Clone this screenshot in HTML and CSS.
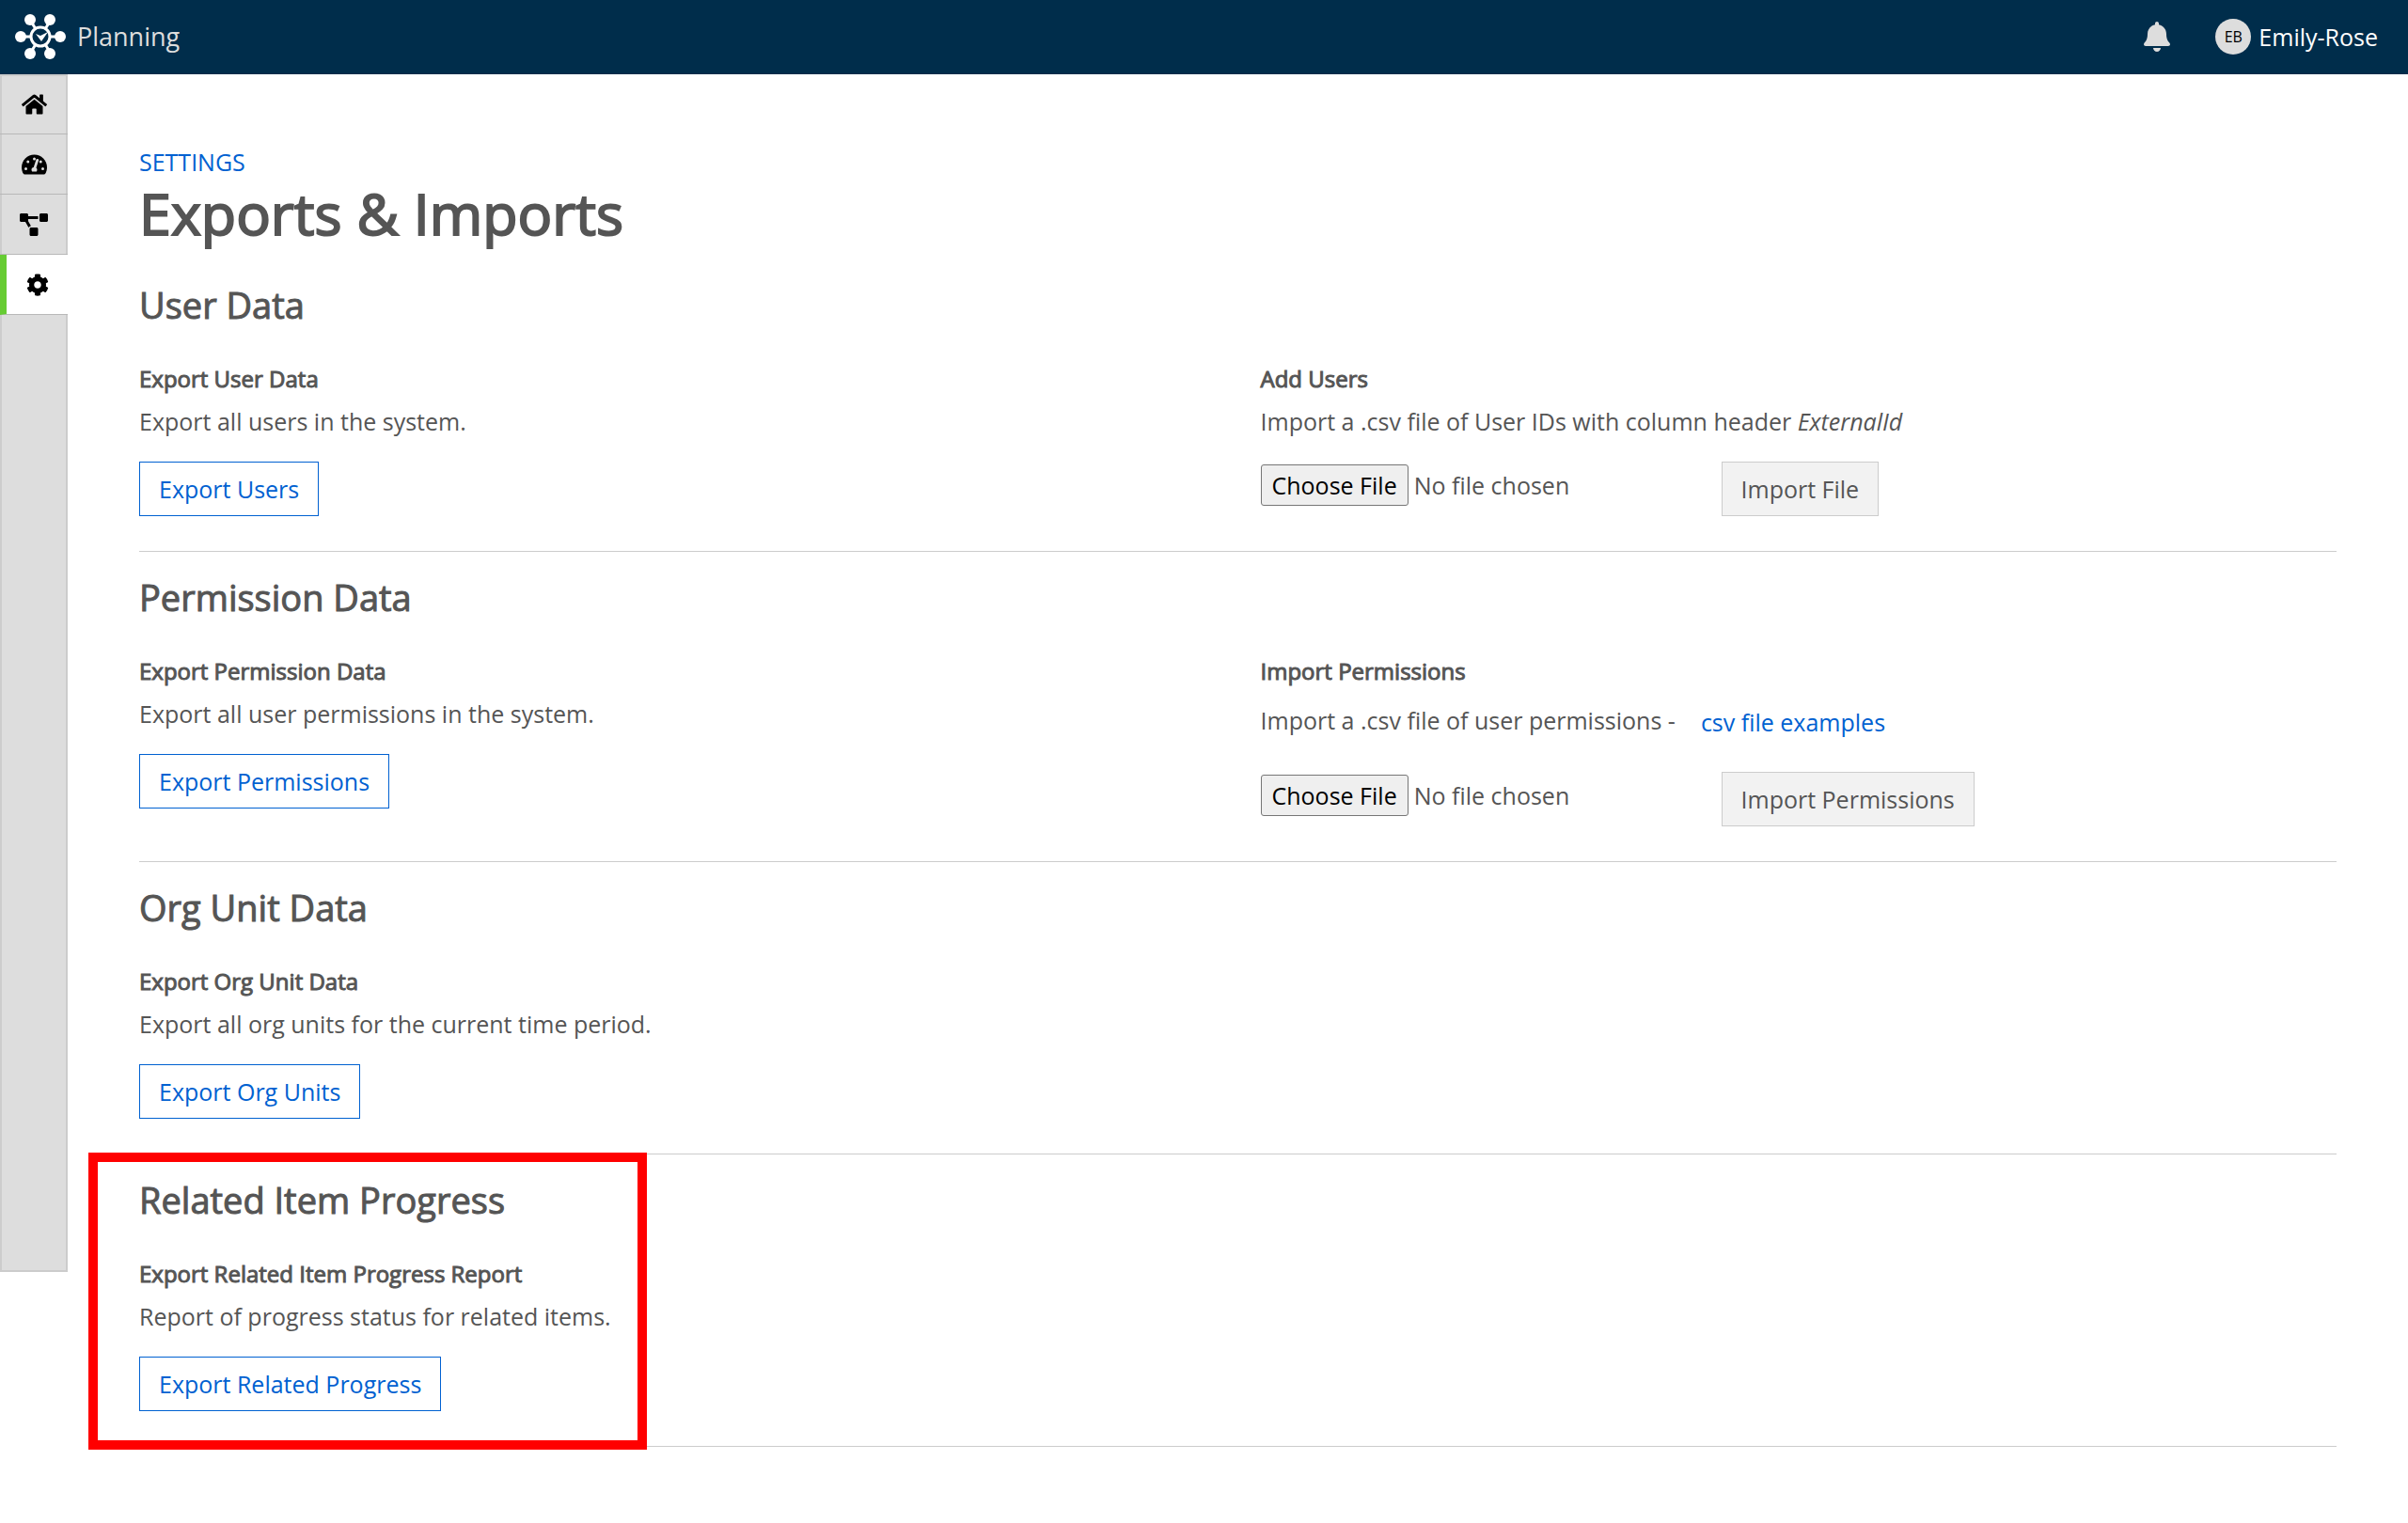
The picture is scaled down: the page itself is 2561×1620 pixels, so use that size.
FILE: index.html
```html
<!DOCTYPE html>
<html lang="en">
<head>
  <meta charset="utf-8">
  <title>Planning - Exports &amp; Imports</title>
  <link rel="stylesheet" href="styles.css">
</head>
<body>

<header class="topbar">
  <a class="brand" href="#">
    <svg class="logo" viewBox="0 0 54 48" aria-hidden="true">
      <g stroke="#fff" stroke-width="3">
        <path d="M6 24h10M38 24h10M16 6l6 10M38 6l-6 10M16 42l6-10M38 42l-6-10"/>
        <circle cx="27" cy="24" r="10" fill="none"/>
      </g>
      <g fill="#fff">
        <circle cx="6" cy="24" r="6"/><circle cx="48" cy="24" r="6"/>
        <circle cx="16" cy="6" r="6"/><circle cx="37" cy="6" r="6"/>
        <circle cx="16" cy="42" r="6"/><circle cx="37" cy="42" r="6"/>
        <path d="M22 21l5 2 8-4-7 10z"/>
      </g>
    </svg>
    <span>Planning</span>
  </a>
  <div class="user-area">
    <button class="bell" aria-label="Notifications">
      <svg viewBox="0 0 448 512"><path d="M224 512c35.32 0 63.97-28.65 63.97-64H160.03c0 35.35 28.65 64 63.97 64zm215.39-149.71c-19.32-20.76-55.47-51.99-55.47-154.29 0-77.7-54.48-139.9-127.94-155.16V32c0-17.67-14.32-32-31.98-32s-31.98 14.33-31.98 32v20.84C118.56 68.1 64.08 130.3 64.08 208c0 102.3-36.15 133.53-55.47 154.29-6 6.45-8.66 14.16-8.61 21.71.11 16.4 12.98 32 32.1 32h383.8c19.12 0 32-15.6 32.1-32 .05-7.55-2.61-15.27-8.61-21.71z"/></svg>
    </button>
    <a class="user" href="#"><span class="avatar">EB</span>Emily-Rose</a>
  </div>
</header>

<div class="layout">
  <nav class="sidebar">
    <a href="#" aria-label="Home"><svg viewBox="0 0 576 512"><path d="M280.37 148.26L96 300.11V464a16 16 0 0 0 16 16l112.06-.29a16 16 0 0 0 15.92-16V368a16 16 0 0 1 16-16h64a16 16 0 0 1 16 16v95.64a16 16 0 0 0 16 16.05L464 480a16 16 0 0 0 16-16V300L295.67 148.26a12.19 12.19 0 0 0-15.3 0zM571.6 251.47L488 182.56V44.05a12 12 0 0 0-12-12h-56a12 12 0 0 0-12 12v72.61L318.47 43a48 48 0 0 0-61 0L4.34 251.47a12 12 0 0 0-1.6 16.9l25.5 31A12 12 0 0 0 45.15 301l235.22-193.74a12.19 12.19 0 0 1 15.3 0L530.9 301a12 12 0 0 0 16.9-1.6l25.5-31a12 12 0 0 0-1.7-16.93z"/></svg></a>
    <a href="#" aria-label="Dashboard"><svg viewBox="0 0 576 512">
      <path d="M288 32C129 32 0 161 0 320c0 53 14 102 39 145 6 9 16 15 27 15h444c11 0 21-6 27-15 25-43 39-92 39-145C576 161 447 32 288 32z"/>
      <g fill="#ddd"><circle cx="288" cy="128" r="32"/><circle cx="144" cy="192" r="32"/><circle cx="96" cy="352" r="32"/><circle cx="480" cy="352" r="32"/><circle cx="432" cy="192" r="32"/><path d="M360 130c-13-4-26 3-30 15l-58 176c-27 2-48 24-48 51 0 16 5 32 14 44h100c9-12 14-28 14-44 0-17-9-32-22-41l57-171c4-13-3-26-27-30z"/></g>
    </svg></a>
    <a href="#" aria-label="Diagram"><svg viewBox="0 0 640 512"><path d="M384 320H256c-17.67 0-32 14.33-32 32v128c0 17.67 14.33 32 32 32h128c17.67 0 32-14.33 32-32V352c0-17.67-14.33-32-32-32zM192 32c0-17.67-14.33-32-32-32H32C14.33 0 0 14.33 0 32v128c0 17.67 14.33 32 32 32h95.72l73.16 128.04C211.98 300.98 232.4 288 256 288h.28L192 175.51V128h224V64H192V32zM608 0H480c-17.67 0-32 14.33-32 32v128c0 17.67 14.33 32 32 32h128c17.67 0 32-14.33 32-32V32c0-17.67-14.33-32-32-32z"/></svg></a>
    <a href="#" class="active" aria-label="Settings"><svg viewBox="0 0 512 512"><path d="M487.4 315.7l-42.6-24.6c4.3-23.2 4.3-47 0-70.2l42.6-24.6c4.9-2.8 7.1-8.6 5.5-14-11.1-35.6-30-67.8-54.7-94.6-3.8-4.1-10-5.1-14.8-2.3L380.8 110c-17.9-15.4-38.5-27.3-60.8-35.1V25.8c0-5.6-3.9-10.5-9.4-11.7-36.7-8.2-74.3-7.8-109.2 0-5.5 1.2-9.4 6.1-9.4 11.7V75c-22.2 7.9-42.8 19.8-60.8 35.1L88.7 85.5c-4.9-2.8-11-1.9-14.8 2.3-24.7 26.7-43.6 58.9-54.7 94.6-1.7 5.4.6 11.2 5.5 14L67.3 221c-4.3 23.2-4.3 47 0 70.2l-42.6 24.6c-4.9 2.8-7.1 8.6-5.5 14 11.1 35.6 30 67.8 54.7 94.6 3.8 4.1 10 5.1 14.8 2.3l42.6-24.6c17.9 15.4 38.5 27.3 60.8 35.1v49.2c0 5.6 3.9 10.5 9.4 11.7 36.7 8.2 74.3 7.8 109.2 0 5.5-1.2 9.4-6.1 9.4-11.7v-49.2c22.2-7.9 42.8-19.8 60.8-35.1l42.6 24.6c4.9 2.8 11 1.9 14.8-2.3 24.7-26.7 43.6-58.9 54.7-94.6 1.5-5.5-.7-11.3-5.6-14.1zM256 336c-44.1 0-80-35.9-80-80s35.9-80 80-80 80 35.9 80 80-35.9 80-80 80z"/></svg></a>
  </nav>

  <main>
    <a class="crumb" href="#">SETTINGS</a>
    <h1>Exports &amp; Imports</h1>

    <section>
      <h2>User Data</h2>
      <div class="columns">
        <div>
          <h3>Export User Data</h3>
          <p>Export all users in the system.</p>
          <button class="btn">Export Users</button>
        </div>
        <div>
          <h3><label for="usersFile">Add Users</label></h3>
          <p>Import a .csv file of User IDs with column header <em>ExternalId</em></p>
          <div class="upload">
            <input type="file" id="usersFile">
            <button class="btn" disabled>Import File</button>
          </div>
        </div>
      </div>
    </section>

    <section>
      <h2>Permission Data</h2>
      <div class="columns">
        <div>
          <h3>Export Permission Data</h3>
          <p>Export all user permissions in the system.</p>
          <button class="btn">Export Permissions</button>
        </div>
        <div>
          <h3><label for="permissionsFile">Import Permissions</label></h3>
          <div class="with-link">
            <p>Import a .csv file of user permissions -</p>
            <a href="#">csv file examples</a>
          </div>
          <div class="upload">
            <input type="file" id="permissionsFile">
            <button class="btn" disabled>Import Permissions</button>
          </div>
        </div>
      </div>
    </section>

    <section>
      <h2>Org Unit Data</h2>
      <h3>Export Org Unit Data</h3>
      <p>Export all org units for the current time period.</p>
      <button class="btn">Export Org Units</button>
    </section>

    <section class="highlighted">
      <h2>Related Item Progress</h2>
      <h3>Export Related Item Progress Report</h3>
      <p>Report of progress status for related items.</p>
      <button class="btn">Export Related Progress</button>
    </section>
  </main>
</div>

</body>
</html>
```
FILE: styles.css
```css
* { box-sizing: border-box; }
body {
  margin: 0; background: #fff; color: #555;
  font-family: "Open Sans", "Noto Sans", sans-serif; font-size: 25px; line-height: 36px;
}
h1, h2, h3, p { margin: 0; }
a { color: #0061d1; text-decoration: none; }
button, input { font: inherit; }

/* Top bar */
.topbar {
  display: flex; justify-content: space-between; align-items: center;
  height: 79px; padding: 0 32px 2px 16px; background: #002d4b;
}
.brand { display: flex; align-items: center; gap: 12px; color: #ddd; font-size: 27px; }
.logo { width: 54px; height: 48px; }
.user-area { display: flex; align-items: center; gap: 48px; }
.bell { display: flex; padding: 0; border: 0; background: none; }
.bell svg { height: 32px; fill: #ddd; }
.user { display: flex; align-items: center; gap: 8px; color: #fff; }
.avatar {
  width: 38px; height: 38px; border-radius: 50%; background: #ddd; color: #000;
  font-size: 16px; line-height: 38px; text-align: center;
}

/* Side menu */
.layout { display: flex; align-items: flex-start; }
.sidebar {
  width: 72px; height: calc(83.5vh - 79px); background: #ddd;
  box-shadow: inset 0 0 0 2px #ccc;
}
.sidebar a {
  display: flex; justify-content: center; align-items: center;
  height: 64px; border-bottom: 1px solid #b8b8b8;
}
.sidebar svg { height: 24px; }
.sidebar .active { background: #fff; border-left: 7px solid #6c3; }

/* Content */
main { flex: 1; padding: 75px 76px; }
.crumb { display: block; }
h1, h2, h3 { font-weight: 400; -webkit-text-stroke: 1px #555; }
h1 { margin-bottom: 12px; font-size: 61px; line-height: 74px; -webkit-text-stroke-width: 2px; }
h2 { margin-bottom: 34px; font-size: 38px; line-height: 54px; }
h3 { margin-bottom: 9px; font-size: 24px; }
section { padding: 21px 0 37px; border-bottom: 1px solid #ccc; }
p { margin-bottom: 25px; }
.columns { display: grid; grid-template-columns: 1fr 1fr; column-gap: 48px; }

.btn {
  display: block; height: 58px; padding: 0 20px;
  border: 1px solid #0061d1; background: #fff; color: #0061d1;
}
.btn:disabled { border-color: #ccc; background: #f2f2f2; color: #555; }

.upload { display: flex; align-items: flex-start; }
.upload input { width: 490px; padding-top: 3px; }
.upload input::file-selector-button {
  height: 44px; padding: 0 11px; margin-right: 6px; font: inherit;
  border: 1px solid #767676; border-radius: 3px; background: #efefef; color: #000;
}

.with-link { display: flex; align-items: center; gap: 27px; height: 58px; margin: -2px 0 24px; }
.with-link p { margin: 0; padding-bottom: 4px; }

/* Red frame round the report section */
.highlighted { position: relative; }
.highlighted::before {
  content: ""; position: absolute; top: -2px; bottom: -4px; left: -54px;
  width: 574px; border: 10px solid #f00; pointer-events: none;
}
```
